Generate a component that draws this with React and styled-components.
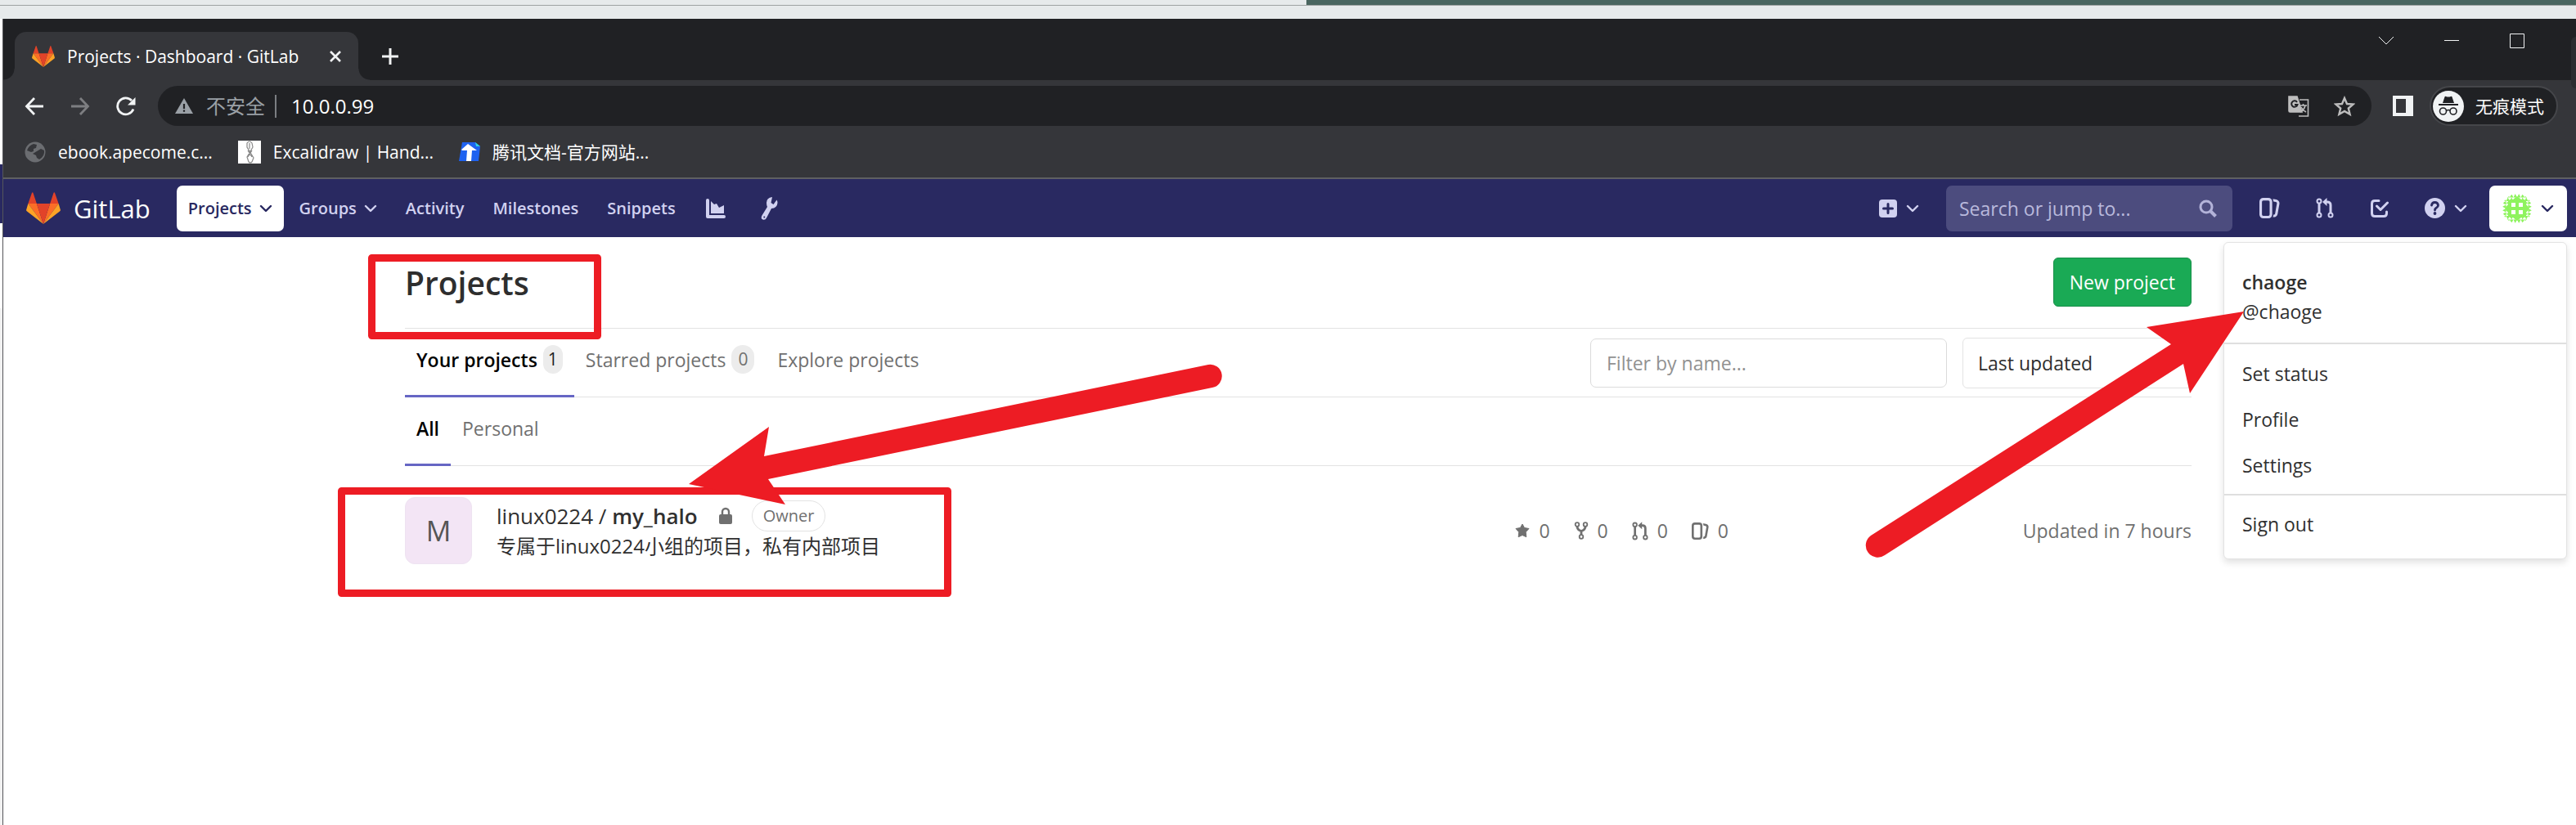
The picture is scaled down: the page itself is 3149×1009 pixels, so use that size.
import React from 'react';
import styled, { createGlobalStyle, css } from 'styled-components';

const Global = createGlobalStyle`
  *, *::before, *::after { box-sizing: border-box; }
  body {
    margin: 0;
    background: #fff;
    color: #303030;
    font-family: "Open Sans", "Noto Sans CJK SC", sans-serif;
    font-size: 23px;
    line-height: 36px;
    overflow-x: hidden;
  }
  button, input, select { font: inherit; color: inherit; margin: 0; }
  a { color: inherit; text-decoration: none; }
  svg { display: block; flex: none; }
  ul { list-style: none; margin: 0; padding: 0; }
`;

/* ---------- desktop behind the window ---------- */
const Desktop = styled.div`
  display: grid;
  grid-template-columns: 4px minmax(0, 1fr);
  grid-template-rows: 23px auto;
  min-height: 100vh;
`;
const Behind = styled.div`
  grid-column: 1 / -1;
  background: #e6eaeb;
`;
const BehindTop = styled.div`
  height: 7px;
  border-bottom: 1px solid #9da2a2;
  background: linear-gradient(90deg, #e6eaeb 0 1597px, #4a6660 1597px);
`;
const Edge = styled.div`
  border-right: 1px solid #55565a;
  background: linear-gradient(#fff 0 178px, #292961 178px 250px, #fff 250px 354px, #f2f2f2 354px);
`;
const Window = styled.div`
  position: relative;
  background: #fff;
  &::after {
    content: "";
    position: absolute;
    top: 22px;
    right: 0;
    width: 6px;
    height: 63px;
    border-radius: 6px 0 0 6px;
    background: #2c2d30;
  }
`;

/* ---------- browser chrome ---------- */
const IconButton = styled.button`
  display: flex;
  align-items: center;
  justify-content: center;
  border: 0;
  padding: 0;
  background: none;
  color: ${(p) => p.$color || '#f1f3f4'};
`;
const TabStrip = styled.div`
  display: flex;
  align-items: flex-end;
  height: 75px;
  padding-left: 14px;
  background: #202124;
`;
const Tab = styled.div`
  display: flex;
  align-items: center;
  position: relative;
  width: 420px;
  height: 59px;
  padding: 0 20px 0 21px;
  border-radius: 14px 14px 0 0;
  background: #35363a;
  color: #fff;
  font-size: 21px;
  white-space: nowrap;
  &::before, &::after {
    content: "";
    position: absolute;
    bottom: 0;
    width: 14px;
    height: 14px;
  }
  &::before {
    right: 100%;
    background: radial-gradient(circle at 0 0, #202124 13px, #35363a 14px);
  }
  &::after {
    left: 100%;
    background: radial-gradient(circle at 100% 0, #202124 13px, #35363a 14px);
  }
`;
const TabTitle = styled.span`
  flex: 1;
  margin-left: 15px;
`;
const NewTab = styled(IconButton)`
  width: 22px;
  height: 59px;
  margin-left: 28px;
`;
const Controls = styled.div`
  display: flex;
  align-items: flex-start;
  gap: 62px;
  align-self: flex-start;
  margin: 18px 63px 0 auto;
`;

const Toolbar = styled.div`
  display: flex;
  align-items: center;
  height: 63px;
  padding: 0 22px 0 26px;
  background: #35363a;
`;
const NavButtons = styled.div`
  display: flex;
  gap: 32px;
  margin-right: 27px;
`;
const Omnibox = styled.div`
  display: flex;
  align-items: center;
  flex: 1;
  height: 49px;
  padding: 0 20px;
  border-radius: 25px;
  background: #202124;
  color: #fff;
`;
const Insecure = styled.span`
  margin-left: 15px;
  padding-right: 12px;
  border-right: 2px solid #7b7e82;
  color: #9aa0a6;
  font-size: 24px;
  line-height: 28px;
`;
const Address = styled.span`
  flex: 1;
  margin-left: 18px;
  font-size: 24px;
`;
const OmniActions = styled.div`
  display: flex;
  gap: 30px;
`;
const PanelButton = styled(IconButton)`
  margin: 0 20px 0 26px;
`;
const Incognito = styled.button`
  display: flex;
  align-items: center;
  gap: 14px;
  height: 49px;
  padding: 0 15px 0 2px;
  border: 2px solid #45464a;
  border-radius: 25px;
  background: #202124;
  color: #fff;
  font-size: 21px;
  white-space: nowrap;
`;

const Bookmarks = styled.nav`
  display: flex;
  align-items: center;
  gap: 31px;
  height: 58px;
  padding: 0 26px 6px;
  border-bottom: 2px solid #5f6061;
  background: #35363a;
  color: #fff;
  font-size: 21px;
`;
const Bookmark = styled.a`
  display: flex;
  align-items: center;
  gap: 15px;
  white-space: nowrap;
`;

/* ---------- GitLab header ---------- */
const Header = styled.header`
  display: flex;
  align-items: center;
  position: relative;
  height: 71px;
  padding: 0 11px 0 28px;
  background: #292961;
  color: #d1d1f0;
  font-size: 20px;
  font-weight: 600;
`;
const Brand = styled.a`
  display: flex;
  align-items: center;
  gap: 16px;
  margin-right: 32px;
  color: #fff;
  font-size: 31px;
  font-weight: 400;
`;
const NavList = styled.ul`
  display: flex;
  align-items: center;
`;
const navItem = css`
  display: flex;
  align-items: center;
  gap: ${(p) => p.$gap || 9}px;
  height: 56px;
  padding: 0 ${(p) => p.$pad || 16}px;
  border: 0;
  border-radius: 7px;
  background: none;
  color: inherit;
  white-space: nowrap;
  ${(p) => p.$active && css`
    background: #fff;
    color: #292961;
  `}
`;
const NavButton = styled.button`${navItem}`;
const NavLink = styled.a`${navItem}`;
const HeaderEnd = styled.div`
  display: flex;
  align-items: center;
  margin-left: auto;
`;
const Search = styled.label`
  display: flex;
  align-items: center;
  width: 350px;
  height: 56px;
  margin: 0 17px;
  padding: 0 19px 0 16px;
  border-radius: 7px;
  background: #4c4c7e;
  color: #b3b3d9;
`;
const SearchInput = styled.input`
  flex: 1;
  min-width: 0;
  padding: 0;
  border: 0;
  outline: 0;
  background: none;
  font-size: 23px;
  font-weight: 400;
  &::placeholder { color: #b9b9dc; opacity: 1; }
`;

const UserMenu = styled.div`
  position: absolute;
  z-index: 2;
  top: 77px;
  right: 11px;
  width: 420px;
  border: 1px solid #e3e3e3;
  border-radius: 6px;
  background: #fff;
  box-shadow: 0 4px 8px rgba(0, 0, 0, 0.12);
  color: #303030;
  font-size: 23px;
  font-weight: 400;
`;
const MenuGroup = styled.ul`
  padding: ${(p) => p.$pad};
  & + & { border-top: 2px solid #dfdfdf; }
`;
const MenuLink = styled.a`
  display: block;
  padding: ${(p) => (p.$flat ? 0 : 10)}px 22px;
`;
const Strong = styled.strong`
  display: block;
  font-weight: 600;
`;

/* ---------- page ---------- */
const Page = styled.main`
  padding-left: 21px;
`;
const Content = styled.div`
  position: relative;
  max-width: 2184px;
  margin: 0 auto;
`;
const TitleRow = styled.div`
  display: flex;
  align-items: flex-start;
  justify-content: space-between;
  height: 112px;
  padding-top: 25px;
  border-bottom: 1px solid #e3e3e3;
`;
const Title = styled.h1`
  margin: 0;
  color: #2e2e2e;
  font-size: 39px;
  font-weight: 600;
  line-height: 62px;
`;
const NewProject = styled.a`
  height: 60px;
  padding: 0 19px;
  border: 1px solid #168f48;
  border-radius: 6px;
  background: #1aaa55;
  color: #fff;
  line-height: 58px;
`;
const TabRow = styled.div`
  display: flex;
  align-items: center;
  justify-content: space-between;
  height: 84px;
  border-bottom: 1px solid #e3e3e3;
`;
const Tabs = styled.nav`
  display: flex;
  align-self: stretch;
`;
const TabLink = styled.a`
  display: flex;
  align-items: center;
  gap: 7px;
  height: 84px;
  padding: 0 14px 6px;
  border-bottom: 3px solid ${(p) => (p.$active ? '#6666c4' : 'transparent')};
  color: ${(p) => (p.$active ? '#000' : '#707070')};
  font-weight: ${(p) => (p.$active ? 600 : 400)};
`;
const Count = styled.span`
  padding: 0 ${(p) => (p.$active ? 6 : 8)}px;
  border-radius: 17px;
  background: #ececec;
  color: ${(p) => (p.$active ? '#1f1f1f' : '#707070')};
  font-size: 21px;
  font-weight: 400;
  line-height: 35px;
  text-align: center;
`;
const Filters = styled.div`
  display: flex;
  align-items: center;
  gap: 19px;
`;
const FilterInput = styled.input`
  width: 436px;
  height: 60px;
  padding: 0 19px;
  border: 1px solid #dbdbdb;
  border-radius: 7px;
  background: #fff;
  &::placeholder { color: #919191; opacity: 1; }
`;
const SortSelect = styled.select`
  appearance: none;
  width: 280px;
  height: 62px;
  padding: 0 18px;
  border: 1px solid #e3e3e3;
  border-radius: 6px;
  background: #fff;
  color: #2e2e2e;
`;
const ProjectRow = styled.article`
  display: grid;
  grid-template-columns: 82px minmax(0, 1fr) auto 566px;
  align-items: center;
  padding-top: 38px;
`;
const Letter = styled.div`
  height: 82px;
  border: 1px solid #eee3f1;
  border-radius: 12px;
  background: #f3e5f5;
  color: #555;
  font-size: 34px;
  line-height: 80px;
  text-align: center;
`;
const Info = styled.div`
  padding-left: 30px;
`;
const NameLine = styled.div`
  display: flex;
  align-items: center;
  height: 38px;
`;
const ProjectName = styled.h2`
  margin: 0 26px 0 0;
  font-size: 26px;
  font-weight: 400;
`;
const Bold = styled.b`
  font-weight: 600;
`;
const Role = styled.span`
  margin-left: 24px;
  padding: 0 13px;
  border: 1px solid #e3e3e3;
  border-radius: 19px;
  color: #707070;
  font-size: 20px;
  line-height: 36px;
`;
const Description = styled.p`
  margin: 0;
  font-size: 24px;
`;
const Stats = styled.ul`
  display: flex;
  gap: 29px;
  color: #707070;
`;
const Stat = styled.li`
  display: flex;
  align-items: center;
  gap: 11px;
`;
const Updated = styled.time`
  color: #707070;
  text-align: right;
`;
const Marks = styled.svg`
  position: absolute;
  z-index: 3;
  top: 0;
  left: 0;
  overflow: visible;
  pointer-events: none;
`;

/* ---------- drawings ---------- */
const Tanuki = ({ w }) => (
  <svg width={w} height={Math.round(w * 0.93)} viewBox="0 0 36 33.5" aria-hidden="true">
    <path fill="#e24329" d="M2 12 6 .6c.2-.6 1-.6 1.200 0L11 12zM34 12 30 .6c-.2-.6-1-.6-1.200 0L25 12z" />
    <path fill="#fc6d26" d="M2 12h9l7 21.500zM34 12h-9l-7 21.500z" />
    <path fill="#fca326" d="M2 12 .1 18.500c-.1.600 0 1.100.500 1.500L18 33.500zM34 12l1.900 6.500c.1.600 0 1.100-.5 1.500L18 33.500z" />
    <path fill="#e24329" d="M11 12h14l-7 21.500z" />
  </svg>
);
const Line = ({ w = 24, h = w, box = '0 0 24 24', sw = 2.4, children, ...rest }) => (
  <svg width={w} height={h} viewBox={box} fill="none" stroke="currentColor" strokeWidth={sw} aria-hidden="true" {...rest}>
    {children}
  </svg>
);
const Chevron = () => (
  <Line w={16} h={10} box="0 0 16 10" strokeLinecap="round" strokeLinejoin="round">
    <path d="M2 2l6 6 6-6" />
  </Line>
);
const Issues = ({ w }) => (
  <svg width={w} height={w} viewBox="0 0 16 16" fill="currentColor" aria-hidden="true">
    <path d="M10.458 15.012l.311.055a3 3 0 0 0 3.476-2.433l1.389-7.879A3 3 0 0 0 13.200 1.280L11.230.933a3.002 3.002 0 0 0-.824-.031c.364.590.580 1.280.593 2.020l1.854.328a1 1 0 0 1 .811 1.158l-1.389 7.879a1 1 0 0 1-1.158.810l-.118-.020a3.980 3.980 0 0 1-.541 1.935zM3 0h4a3 3 0 0 1 3 3v10a3 3 0 0 1-3 3H3a3 3 0 0 1-3-3V3a3 3 0 0 1 3-3zm0 2a1 1 0 0 0-1 1v10a1 1 0 0 0 1 1h4a1 1 0 0 0 1-1V3a1 1 0 0 0-1-1H3z" />
  </svg>
);
const Merge = ({ w }) => (
  <Line w={w} h={Math.round(w * 1.14)} box="0 0 22 25" sw={2}>
    <circle cx="4" cy="4" r="2.500" />
    <circle cx="4" cy="21" r="2.500" />
    <circle cx="18" cy="21" r="2.500" />
    <path d="M4 6.500v12" strokeWidth="3" />
    <path d="M18 18.500V9q0-4-4-4h-2" strokeWidth="3" />
    <path d="M13.500 0v10L8 5z" fill="currentColor" stroke="none" />
  </Line>
);
const Fork = () => (
  <Line w={18} h={22} box="0 0 18 22" sw={1.8}>
    <circle cx="4" cy="3.500" r="2.300" />
    <circle cx="14" cy="3.500" r="2.300" />
    <circle cx="9" cy="18.500" r="2.300" />
    <path d="M4 6q0 4 5 5.500Q14 10 14 6M9 11v5" strokeWidth="2.800" />
  </Line>
);
const Star = () => (
  <svg width="18" height="18" viewBox="0 0 18 18" fill="currentColor" aria-hidden="true">
    <path stroke="currentColor" strokeLinejoin="round" d="M9 1l2.500 4.500 5.500 1-3.800 4.200.6 6L9 14.500l-4.800 2.200.6-6L1 6.500l5.500-1z" />
  </svg>
);
const Lock = () => (
  <svg width="16" height="22" viewBox="0 0 16 22" aria-hidden="true">
    <path d="M4 10V6a4 4 0 0 1 8 0v4" fill="none" stroke="#707070" strokeWidth="2.400" />
    <rect y="9" width="16" height="12" rx="2" fill="#707070" />
  </svg>
);
const Identicon = () => {
  const tris = [];
  for (let r = 0; r < 8; r += 1) {
    for (let c = 0; c < 8; c += 1) {
      if (r > 1 && r < 6 && c > 1 && c < 6) continue;
      const x = c * 4.5;
      const y = r * 4.5;
      const side = c < 2 || c > 5;
      const left = c < 4;
      tris.push(side && r > 1 && r < 6
        ? (left ? `M${x} ${y + 2.2}l4.500-2.200v4.500z` : `M${x + 4.5} ${y + 2.2}l-4.500-2.200v4.500z`)
        : r < 4 ? `M${x} ${y + 4.5}l2.200-4.500 2.300 4.500z` : `M${x} ${y}l2.200 4.500 2.300-4.500z`);
    }
  }
  return (
    <svg width="36" height="36" viewBox="0 0 36 36" aria-hidden="true">
      <clipPath id="round"><circle cx="18" cy="18" r="18" /></clipPath>
      <g clipPath="url(#round)" fill="#8ef35e">
        <path d={tris.join('')} />
        <path
          fillRule="evenodd"
          d="M9 7h4l5-4 5 4h4l2 2v4l4 5-4 5v4l-2 2h-4l-5 4-5-4H9l-2-2v-4l-4-5 4-5V9zM11 11v5h5v-5zM20 11v5h5v-5zM11 20v5h5v-5zM20 20v5h5v-5z"
        />
      </g>
    </svg>
  );
};

const stats = [
  { label: 'Stars', icon: <Star /> },
  { label: 'Forks', icon: <Fork /> },
  { label: 'Merge requests', icon: <Merge w={20} /> },
  { label: 'Issues', icon: <Issues w={21} /> },
];

function Chrome() {
  return (
    <>
      <TabStrip>
        <Tab>
          <Tanuki w={28} />
          <TabTitle>Projects · Dashboard · GitLab</TabTitle>
          <IconButton aria-label="Close tab">
            <Line w={16} box="0 0 16 16" sw={2.6}><path d="M2 2l12 12M14 2L2 14" /></Line>
          </IconButton>
        </Tab>
        <NewTab aria-label="New tab">
          <Line w={22} box="0 0 22 22" sw={3}><path d="M11 1v20M1 11h20" /></Line>
        </NewTab>
        <Controls>
          <IconButton aria-label="Search tabs">
            <Line w={18} box="0 0 18 18" sw={1}><path d="M0 4l9 9 9-9" /></Line>
          </IconButton>
          <IconButton aria-label="Minimise">
            <Line w={18} box="0 0 18 18" sw={1}><path d="M0 8.500h18" /></Line>
          </IconButton>
          <IconButton aria-label="Maximise">
            <Line w={18} box="0 0 18 18" sw={1}><path d="M.5.5h17v17H.5z" /></Line>
          </IconButton>
        </Controls>
      </TabStrip>
      <Toolbar>
        <NavButtons>
          <IconButton aria-label="Back"><Line sw={2.8}><path d="M23 12H3M12 2L2.500 12l9.500 10" /></Line></IconButton>
          <IconButton aria-label="Forward" $color="#7d7e81"><Line sw={2.8}><path d="M1 12h20M12 2l9.500 10L12 22" /></Line></IconButton>
          <IconButton aria-label="Reload">
            <Line sw={2.8}>
              <path d="M21 15.500A10 10 0 1 1 19 5" />
              <path d="M23.500 1v9.500H14z" fill="currentColor" stroke="none" />
            </Line>
          </IconButton>
        </NavButtons>
        <Omnibox>
          <svg width="24" height="20" viewBox="0 0 24 20" aria-hidden="true">
            <path fill="#9aa0a6" d="M12 0l11 19H1z" />
            <path stroke="#202124" strokeWidth="2.200" d="M12 7v6M12 14.500v2.300" />
          </svg>
          <Insecure>不安全</Insecure>
          <Address>10.0.0.99</Address>
          <OmniActions>
            <IconButton aria-label="Translate" $color="#bdbdbd">
              <Line w={26} box="0 0 26 26" sw={1.6}>
                <path d="M14 5h10.500v20H13" />
                <path d="M14 12h9M18.500 10v2M21 12q-1 5-6 8M16 14q2 4 6 6" />
                <path d="M1 1h10l6 19H2.500Q1 20 1 18.500z" fill="currentColor" />
                <path d="M11 8a3.700 3.700 0 1 0 .5 3H8" stroke="#202124" strokeWidth="2" />
              </Line>
            </IconButton>
            <IconButton aria-label="Bookmark this page" $color="#bdbdbd">
              <Line w={26} box="0 0 26 26"><path d="M13 3l3 7 7.500.6-5.700 4.900 1.800 7.300-6.600-3.900-6.600 3.900 1.800-7.300L2.500 10.600 10 10z" /></Line>
            </IconButton>
          </OmniActions>
        </Omnibox>
        <PanelButton aria-label="Side panel">
          <svg width="25" height="25" viewBox="0 0 25 25" aria-hidden="true">
            <path fill="#f1f3f4" fillRule="evenodd" d="M0 0h25v25H0zM4 4v17h12V4z" />
          </svg>
        </PanelButton>
        <Incognito>
          <svg width="38" height="38" viewBox="0 0 38 38" aria-hidden="true">
            <circle cx="19" cy="19" r="19" fill="#f1f3f4" />
            <path fill="#202124" d="M12 15l2.500-7.500q.5-1 1.500-.5 3 1 6 0 1-.5 1.500.5L26 15zM7 16h24v2H7z" />
            <path fill="none" stroke="#202124" strokeWidth="1.600" d="M17 24q2-1 4 0" />
            <circle cx="12.500" cy="25" r="4" fill="none" stroke="#202124" strokeWidth="1.600" />
            <circle cx="25" cy="25" r="4" fill="none" stroke="#202124" strokeWidth="1.600" />
          </svg>
          无痕模式
        </Incognito>
      </Toolbar>
      <Bookmarks aria-label="Bookmarks">
        <Bookmark href="#ebook">
          <svg width="26" height="26" viewBox="0 0 26 26" aria-hidden="true">
            <circle cx="13" cy="13" r="12.500" fill="#6b6d71" />
            <path fill="#35363a" d="M3 11q2-6 8-8l4 1-1 4-3 1v3l-3 1zM15 12l5-3 4 2q1 7-6 11l-3-2-1-3-4-2z" />
          </svg>
          ebook.apecome.c...
        </Bookmark>
        <Bookmark href="#excalidraw">
          <svg width="28" height="28" viewBox="0 0 28 28" aria-hidden="true">
            <path fill="#fff" d="M0 0h28v28H0z" />
            <path fill="none" stroke="#888" strokeWidth="1.200" d="M11 3q3-4 6 0l1 5-7 12 2 6q2 2 4 0l2-5-8-13zM14 3v7M12 12l5 8M17 12l-5 8" />
          </svg>
          Excalidraw | Hand...
        </Bookmark>
        <Bookmark href="#docs">
          <svg width="26" height="26" viewBox="0 0 26 26" aria-hidden="true">
            <path fill="#1e62f0" d="M4 1h16l6 5-2 18H0z" />
            <path fill="#2fd5e0" d="M20 1l6 5h-5z" />
            <path fill="#fff" d="M3 10l8-7 11 8h-6l-1 13H9l1-13H4z" />
          </svg>
          腾讯文档-官方网站...
        </Bookmark>
      </Bookmarks>
    </>
  );
}

function TopNav() {
  return (
    <Header>
      <Brand href="#home"><Tanuki w={42} />GitLab</Brand>
      <NavList>
        <li><NavButton $active $pad={14}>Projects<Chevron /></NavButton></li>
        <li><NavButton $pad={19}>Groups<Chevron /></NavButton></li>
        <li><NavLink href="#activity">Activity</NavLink></li>
        <li><NavLink href="#milestones" $pad={19}>Milestones</NavLink></li>
        <li><NavLink href="#snippets">Snippets</NavLink></li>
        <li>
          <NavLink href="#charts" $pad={21} aria-label="Analytics">
            <svg width="24" height="24" viewBox="0 0 24 24" fill="currentColor" aria-hidden="true">
              <path d="M2 0a2 2 0 0 1 2 2v18h18a2 2 0 0 1 0 4H2a2 2 0 0 1-2-2V2a2 2 0 0 1 2-2zM6 3l4 4 3-1 3 5 6-3v10H6z" />
            </svg>
          </NavLink>
        </li>
        <li>
          <NavLink href="#admin" $pad={22} aria-label="Admin area">
            <svg width="22" height="28" viewBox="0 0 22 28" aria-hidden="true">
              <path fill="currentColor" d="M14 0q-7 1-7 7 0 3 1 5L1.500 22.500q-2 4 1 5 3 1 4.500-2L13 14q7-.5 7.500-7 0-2-1-3.500L15.500 9l-3-2z" />
              <circle cx="4.300" cy="24.500" r="1" fill="#292961" />
            </svg>
          </NavLink>
        </li>
      </NavList>
      <HeaderEnd>
        <NavButton $gap={11} aria-label="New…">
          <svg width="22" height="22" viewBox="0 0 22 22" aria-hidden="true">
            <rect width="22" height="22" rx="4" fill="currentColor" />
            <path stroke="#292961" strokeWidth="3" strokeLinecap="round" d="M11 5.500v11M5.500 11h11" />
          </svg>
          <Chevron />
        </NavButton>
        <Search>
          <SearchInput aria-label="Search or jump to" placeholder="Search or jump to..." />
          <Line w={22} box="0 0 22 22" sw={3}><circle cx="9" cy="9" r="7" /><path d="M14 14l6.500 6.500" strokeWidth="4" /></Line>
        </Search>
        <NavLink href="#issues" aria-label="Issues"><Issues w={25} /></NavLink>
        <NavLink href="#merge" $pad={28} aria-label="Merge requests"><Merge w={22} /></NavLink>
        <NavLink href="#todos" aria-label="To-dos">
          <Line w={24} sw={3} strokeLinecap="round" strokeLinejoin="round">
            <path d="M11 2.500H6Q2.500 2.500 2.500 6v12q0 3.500 3.500 3.500h11q3.500 0 3.500-3.500v-2" />
            <path d="M8.500 9l4.500 4.500L21.500 5" />
          </Line>
        </NavLink>
        <NavButton $pad={27} $gap={11} aria-label="Help">
          <svg width="25" height="25" viewBox="0 0 25 25" aria-hidden="true">
            <circle cx="12.500" cy="12.500" r="12.500" fill="currentColor" />
            <path fill="none" stroke="#292961" strokeWidth="2.800" strokeLinecap="round" d="M8.500 9q.5-3.500 4-3.500T16.500 9q0 2-2 3-2 1-2 3" />
            <circle cx="12.500" cy="19" r="1.900" fill="#292961" />
          </svg>
          <Chevron />
        </NavButton>
        <NavButton $active $gap={11} aria-label="chaoge" aria-expanded="true"><Identicon /><Chevron /></NavButton>
      </HeaderEnd>
      <UserMenu>
        <MenuGroup $pad="30px 0 20px">
          <li><MenuLink href="#user" $flat><Strong>chaoge</Strong>@chaoge</MenuLink></li>
        </MenuGroup>
        <MenuGroup $pad="8px 0 7px">
          <li><MenuLink href="#status">Set status</MenuLink></li>
          <li><MenuLink href="#profile">Profile</MenuLink></li>
          <li><MenuLink href="#settings">Settings</MenuLink></li>
        </MenuGroup>
        <MenuGroup $pad="7px 0 14px">
          <li><MenuLink href="#signout">Sign out</MenuLink></li>
        </MenuGroup>
      </UserMenu>
    </Header>
  );
}

export default function App() {
  return (
    <>
      <Global />
      <Desktop>
        <Behind><BehindTop /></Behind>
        <Edge />
        <Window>
          <Chrome />
          <TopNav />
          <Page>
            <Content>
              <TitleRow>
                <Title>Projects</Title>
                <NewProject href="#new">New project</NewProject>
              </TitleRow>
              <TabRow>
                <Tabs aria-label="Project lists">
                  <TabLink href="#yours" $active>Your projects<Count $active>1</Count></TabLink>
                  <TabLink href="#starred">Starred projects<Count>0</Count></TabLink>
                  <TabLink href="#explore">Explore projects</TabLink>
                </Tabs>
                <Filters>
                  <FilterInput aria-label="Filter by name" placeholder="Filter by name..." />
                  <SortSelect aria-label="Sort by"><option>Last updated</option></SortSelect>
                </Filters>
              </TabRow>
              <TabRow>
                <Tabs aria-label="Ownership">
                  <TabLink href="#all" $active>All</TabLink>
                  <TabLink href="#personal">Personal</TabLink>
                </Tabs>
              </TabRow>
              <ProjectRow>
                <Letter>M</Letter>
                <Info>
                  <NameLine>
                    <ProjectName>linux0224 / <Bold>my_halo</Bold></ProjectName>
                    <Lock />
                    <Role>Owner</Role>
                  </NameLine>
                  <Description>专属于linux0224小组的项目，私有内部项目</Description>
                </Info>
                <Stats>
                  {stats.map((s) => (
                    <Stat key={s.label} title={s.label}>{s.icon}0</Stat>
                  ))}
                </Stats>
                <Updated>Updated in 7 hours</Updated>
              </ProjectRow>
              <Marks width="2184" height="460" viewBox="0 0 2184 460" aria-hidden="true">
                <g fill="none" stroke="#ed1c24" strokeWidth="9" strokeLinejoin="round">
                  <path d="M-40.500 25.500h276v95h-276z" />
                  <path d="M-77.500 310.500h741v125h-741z" />
                </g>
                <g fill="#ed1c24">
                  <path d="M347 302l98-70-6 36 543-112a14 14 0 0 1 5 28L444 296l21 31z" />
                  <path d="M2248 91l-119 19 30 21-367 234a14 14 0 0 0 17 24l365-234 8 36z" />
                </g>
              </Marks>
            </Content>
          </Page>
        </Window>
      </Desktop>
    </>
  );
}
